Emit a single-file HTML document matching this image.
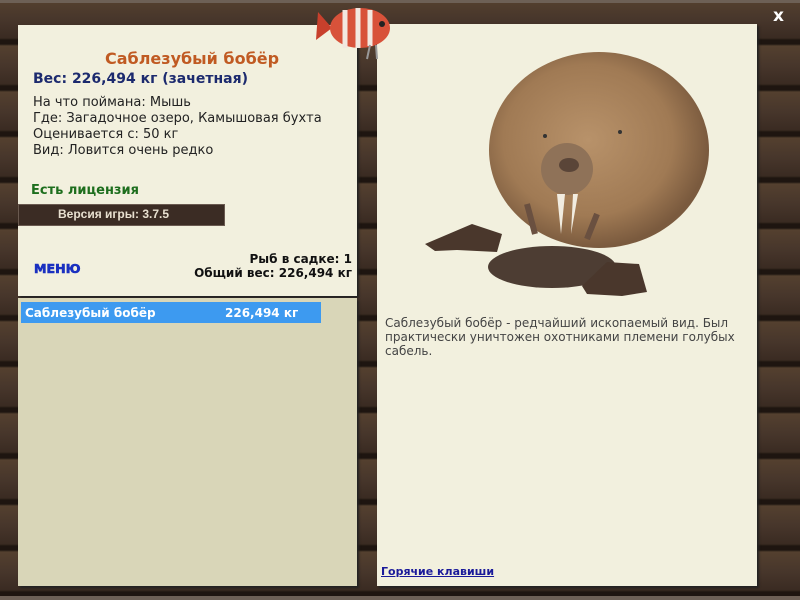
<!DOCTYPE html>
<html><head><meta charset="utf-8"><style>
*{margin:0;padding:0;box-sizing:border-box}
body{width:800px;height:600px;overflow:hidden;position:relative;font-family:"Liberation Sans","DejaVu Sans",sans-serif;
background:#46352b;
background-image:repeating-linear-gradient(180deg,#54402f 0px,#47362b 20px,#3a2b22 38px,#1e1510 40px,#1e1510 44px,#54402f 46px);}
.p{position:absolute}
.t{font-family:"DejaVu Sans",sans-serif;font-size:13px;color:#222}
</style></head><body>
<div class="p" style="left:0;top:0;width:800px;height:3px;background:#6d6056"></div>
<div class="p" style="left:0;top:596px;width:800px;height:4px;background:#6d6056"></div>
<div class="p" style="left:18px;top:25px;width:339px;height:271px;background:#f2f0de;box-shadow:2px 2px 2px #222"></div>
<div class="p" style="left:18px;top:204px;width:207px;height:22px;background:#3b2c24;border:1px solid #6a5a50"></div>
<div class="p" style="left:58px;top:207px;color:#e8e0d0;font:bold 12px 'Liberation Sans Narrow','Liberation Sans',sans-serif;">Версия игры: 3.7.5</div>
<div class="p" style="left:18px;top:298px;width:339px;height:288px;background:#d9d6b8;box-shadow:2px 2px 2px #222"></div>
<div class="p" style="left:105px;top:49px;color:#c05a22;font:bold 16px 'DejaVu Sans',sans-serif">Саблезубый бобёр</div>
<div class="p" style="left:33px;top:71px;color:#1c2a6e;font:bold 14px 'DejaVu Sans',sans-serif">Вес: 226,494 кг (зачетная)</div>
<div class="p t" style="left:33px;top:95px;line-height:16px">На что поймана: Мышь<br>Где: Загадочное озеро, Камышовая бухта<br>Оценивается с: 50 кг<br>Вид: Ловится очень редко</div>
<div class="p" style="left:31px;top:183px;color:#1d6e1d;font:bold 13px 'DejaVu Sans',sans-serif">Есть лицензия</div>
<div class="p" style="left:34px;top:262px;color:#1a30c0;font:900 12px 'DejaVu Sans',sans-serif;transform:scaleX(1.05);transform-origin:left;-webkit-text-stroke:0.6px #1a30c0">МЕНЮ</div>
<div class="p" style="right:448px;top:252px;text-align:right;font:bold 12px 'DejaVu Sans',sans-serif;color:#111;line-height:14px">Рыб в садке: 1<br>Общий вес: 226,494 кг</div>
<div class="p" style="left:21px;top:302px;width:300px;height:21px;background:#3d9af0"></div>
<div class="p" style="left:25px;top:306px;color:#fff;font:bold 12px 'DejaVu Sans',sans-serif">Саблезубый бобёр</div>
<div class="p" style="left:225px;top:306px;color:#fff;font:bold 12px 'DejaVu Sans',sans-serif">226,494 кг</div>
<div class="p" style="left:377px;top:24px;width:380px;height:562px;background:#f2f0de;box-shadow:2px 2px 2px #222"></div>
<div class="p" style="left:773px;top:6px;color:#fff;font:bold 17px 'DejaVu Sans',sans-serif">x</div>
<svg class="p" style="left:377px;top:24px" width="380" height="290">
<defs><radialGradient id="g" cx="45%" cy="45%" r="55%"><stop offset="0" stop-color="#b8926a"/><stop offset=".7" stop-color="#a07a54"/><stop offset="1" stop-color="#7a5a3e"/></radialGradient></defs>
<ellipse cx="175" cy="243" rx="64" ry="21" fill="#4d3d33"/>
<path d="M48 220 L95 200 L125 210 L120 228 L80 226 L58 227Z" fill="#4a372c"/>
<path d="M205 262 L230 238 L262 240 L270 268 L245 272 L210 270Z" fill="#4a372c"/>
<ellipse cx="222" cy="126" rx="110" ry="98" fill="url(#g)"/>
<ellipse cx="190" cy="145" rx="26" ry="26" fill="#8f7258"/>
<ellipse cx="192" cy="141" rx="10" ry="7" fill="#5a4538"/>
<path d="M180 170 l4 40 l4 -40z M196 170 l-2 40 l7 -40z" fill="#f1ece0"/>
<path d="M150 180 l8 30 M220 190 l-10 25" stroke="#6a5040" stroke-width="6"/>
<circle cx="168" cy="112" r="2" fill="#333"/><circle cx="243" cy="108" r="2" fill="#333"/>
</svg>
<div class="p t" style="left:385px;top:316px;width:365px;color:#444;line-height:14px;font-size:12px">Саблезубый бобёр - редчайший ископаемый вид. Был практически уничтожен охотниками племени голубых сабель.</div>
<div class="p" style="left:381px;top:565px;color:#1a1a9a;font:bold 11px 'DejaVu Sans',sans-serif;text-decoration:underline">Горячие клавиши</div>
<svg class="p" style="left:310px;top:0" width="90" height="62">
<path d="M8 12 L22 28 L6 40 Z" fill="#c8402c"/>
<ellipse cx="50" cy="28" rx="30" ry="20" fill="#d8523a"/>
<path d="M35 10 v38 M48 8 v40 M60 10 v36" stroke="#f2e8e0" stroke-width="5"/>
<circle cx="72" cy="24" r="3" fill="#222"/>
<path d="M60 45 l-3 14 M66 45 l1 14" stroke="#999" stroke-width="2"/>
</svg>
</body></html>
